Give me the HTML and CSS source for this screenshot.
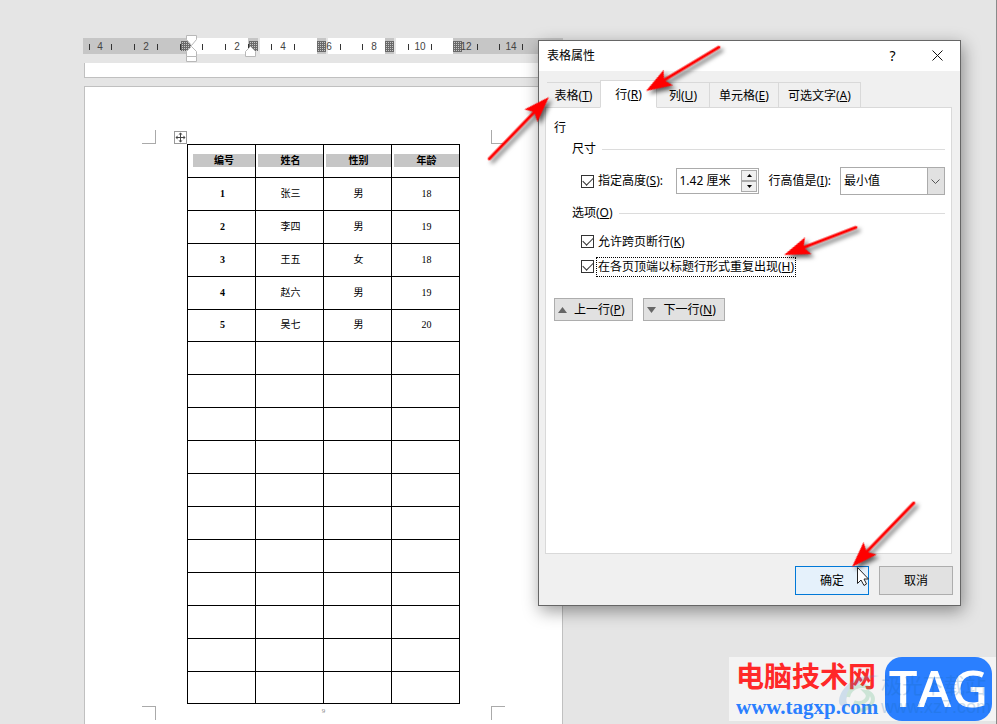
FILE: index.html
```html
<!DOCTYPE html>
<html lang="zh-CN">
<head>
  <title>表格属性</title>
  <meta charset="UTF-8">
  <meta name="viewport" content="width=device-width, initial-scale=1.0">
  <link rel="stylesheet" href="styles.css">
</head>
<body>
  <main class="document">
    <!-- horizontal ruler -->
    <svg class="ruler" width="480" height="30" viewBox="83 34 480 30">
      <defs>
        <pattern id="dots" x="0" y="0" width="2" height="2" patternUnits="userSpaceOnUse">
          <rect width="2" height="2" fill="#6a6a6a"/>
          <rect width="1" height="1" fill="#c8c8c8"/>
        </pattern>
      </defs>
      <g fill="#c6c6c6">
        <rect x="83" y="38" width="480" height="16"/>
      </g>
      <g fill="#e5e5e5">
        <rect x="248" y="51" width="12" height="3"/>
        <rect x="258" y="38" width="2" height="16"/>
        <rect x="326" y="38" width="2" height="16"/>
        <rect x="394" y="38" width="2" height="16"/>
      </g>
      <g fill="#fff">
        <rect x="191" y="38" width="57" height="16"/>
        <rect x="260" y="38" width="57" height="16"/>
        <rect x="328" y="38" width="57" height="16"/>
        <rect x="396" y="38" width="57" height="16"/>
      </g>
      <g fill="url(#dots)">
        <rect x="181" y="41" width="10" height="10"/>
        <rect x="249" y="41" width="9" height="10"/>
        <rect x="317" y="41" width="9" height="11"/>
        <rect x="385" y="41" width="9" height="11"/>
        <rect x="453" y="41" width="9" height="11"/>
      </g>
      <path d="M89.5 44v6M111.500 44v6M134.500 44v6M157.500 44v6M180.500 44v6M202.500 44v6M225.500 44v6M248.500 44v6M271.500 44v6M294.500 44v6M340.500 44v6M362.500 44v6M408.500 44v6M431.500 44v6M477.500 44v6M499.500 44v6M522.500 44v6" stroke="#333" fill="none"/>
      <g class="ruler-num">
        <text x="100" y="50">4</text>
        <text x="146" y="50">2</text>
        <text x="237" y="50">2</text>
        <text x="283" y="50">4</text>
        <text x="329" y="50">6</text>
        <text x="374" y="50">8</text>
        <text x="420" y="50">10</text>
        <text x="466" y="50">12</text>
        <text x="511" y="50">14</text>
      </g>
      <g fill="#fff" stroke="#b8b8b8">
        <path d="M186.500 35.500h10v4l-5 6l-5 -6z"/>
        <path d="M186.500 56.500v-5l5 -5l5 5v5z"/>
        <path d="M186.500 56.500h10v5h-10z"/>
        <path d="M245.500 56.500v-5l5 -5l5 5v5z"/>
      </g>
    </svg>

    <div class="prev-page"></div>

    <div class="page">
      <div class="marks marks-top"><i></i><i></i></div>
      <div class="table-wrap">
        <svg class="move-handle" width="13" height="13" viewBox="0 0 13 13" fill="none">
          <rect x="0.500" y="0.500" width="12" height="12" fill="#fff" stroke="#999"/>
          <path d="M6.500 2v9M2 6.500h9" stroke="#444"/>
          <path d="M6.500 1.500l2 2h-4zM6.500 11.500l2 -2h-4zM1.500 6.500l2 -2v4zM11.500 6.500l-2 -2v4z" fill="#444"/>
        </svg>
        <table class="roster">
          <thead>
            <tr><th><span>编号</span></th><th><span>姓名</span></th><th><span>性别</span></th><th><span>年龄</span></th></tr>
          </thead>
          <tbody>
            <tr><td>1</td><td>张三</td><td>男</td><td>18</td></tr>
            <tr><td>2</td><td>李四</td><td>男</td><td>19</td></tr>
            <tr><td>3</td><td>王五</td><td>女</td><td>18</td></tr>
            <tr><td>4</td><td>赵六</td><td>男</td><td>19</td></tr>
            <tr><td>5</td><td>吴七</td><td>男</td><td>20</td></tr>
            <tr><td></td><td></td><td></td><td></td></tr>
            <tr><td></td><td></td><td></td><td></td></tr>
            <tr><td></td><td></td><td></td><td></td></tr>
            <tr><td></td><td></td><td></td><td></td></tr>
            <tr><td></td><td></td><td></td><td></td></tr>
            <tr><td></td><td></td><td></td><td></td></tr>
            <tr><td></td><td></td><td></td><td></td></tr>
            <tr><td></td><td></td><td></td><td></td></tr>
            <tr><td></td><td></td><td></td><td></td></tr>
            <tr><td></td><td></td><td></td><td></td></tr>
            <tr><td></td><td></td><td></td><td></td></tr>
          </tbody>
        </table>
      </div>
      <div class="marks marks-bottom"><i></i><span>9</span><i></i></div>
    </div>
  </main>

  <form class="dialog" role="dialog" aria-labelledby="dialogTitle">
    <header class="titlebar">
      <h1 id="dialogTitle">表格属性</h1>
      <button type="button" class="help" aria-label="帮助">?</button>
      <button type="button" class="close" aria-label="关闭">
        <svg width="11" height="11" viewBox="0 0 11 11"><path d="M0.500 0.500l10 10M10.500 0.500l-10 10" stroke="#111" fill="none"/></svg>
      </button>
    </header>

    <nav class="tabs" role="tablist">
      <button type="button" role="tab" class="tab-table">表格(<u>T</u>)</button>
      <button type="button" role="tab" class="tab-row active" aria-selected="true">行(<u>R</u>)</button>
      <button type="button" role="tab" class="tab-col">列(<u>U</u>)</button>
      <button type="button" role="tab">单元格(<u>E</u>)</button>
      <button type="button" role="tab">可选文字(<u>A</u>)</button>
    </nav>

    <section class="panel">
      <h2>行</h2>
      <h3 class="group">尺寸</h3>
      <div class="size-row">
        <input type="checkbox" id="useHeight" checked>
        <label for="useHeight">指定高度(<u>S</u>):</label>
        <div class="spinner">
          <input type="text" value="1.42 厘米" aria-label="指定高度">
          <div class="steps">
            <button type="button" aria-label="增加"><svg width="5" height="3"><path d="M0 3h5l-2.500 -3z"/></svg></button>
            <button type="button" aria-label="减少"><svg width="5" height="3"><path d="M0 0h5l-2.500 3z"/></svg></button>
          </div>
        </div>
        <label for="rule">行高值是(<u>I</u>):</label>
        <div class="select">
          <select id="rule"><option>最小值</option><option>固定值</option></select>
          <svg width="9" height="5" viewBox="0 0 9 5"><path d="M0.500 0.500l4 4l4 -4" stroke="#555" fill="none"/></svg>
        </div>
      </div>
      <h3 class="group">选项(<u>O</u>)</h3>
      <div class="check">
        <input type="checkbox" id="breakRow" checked>
        <label for="breakRow">允许跨页断行(<u>K</u>)</label>
      </div>
      <div class="check">
        <input type="checkbox" id="repeatHead" checked>
        <label for="repeatHead" class="focused">在各页顶端以标题行形式重复出现(<u>H</u>)</label>
      </div>
      <div class="row-nav">
        <button type="button"><svg width="9" height="6"><path d="M0 6h9l-4.500 -6z"/></svg>上一行(<u>P</u>)</button>
        <button type="button"><svg width="9" height="6"><path d="M0 0h9l-4.500 6z"/></svg>下一行(<u>N</u>)</button>
      </div>
    </section>

    <footer class="actions">
      <button type="button" class="ok">确定</button>
      <button type="button">取消</button>
    </footer>
  </form>

  <aside class="brand">
    <div class="brand-text">
      <strong>电脑技术网</strong>
      <a href="#">www.tagxp.com</a>
    </div>
    <b class="brand-tag">TAG</b>
    <div class="ghost">
      <svg width="44" height="40" viewBox="0 0 44 40" fill="none">
        <path d="M42 3C24 -1 4 12 2 27c-1 7 6 8 11 5C3 30 14 8 42 3z" fill="#4d8fd0"/>
        <path d="M11 24C13 12 30 10 33 17M17 29c8 4 18 -4 12 -10c12 2 8 18 -9 19" stroke="#44b070" stroke-width="4"/>
      </svg>
      <p><span>极光下载站</span><small>www.xz7.com</small></p>
    </div>
  </aside>

  <!-- callout arrows and mouse pointer -->
  <svg class="callouts" width="997" height="724" viewBox="0 0 997 724">
    <defs>
      <path id="head" d="M0 0L26 -9L21 0L26 9z"/>
    </defs>
    <g class="arrow">
      <g transform="translate(549 97) rotate(134)"><path d="M20 0H86"/><use href="#head"/></g>
      <g transform="translate(646 91) rotate(-31)"><path d="M20 0H85"/><use href="#head"/></g>
      <g transform="translate(784 255) rotate(-21)"><path d="M20 0H77"/><use href="#head"/></g>
      <g transform="translate(852 567) rotate(-46)"><path d="M20 0H89"/><use href="#head"/></g>
    </g>
    <path d="M857.500 567.500v16l3.500 -3.500l3 5.500l2.500 -1.500l-2.500 -5h4.500z" fill="#fff" stroke="#222"/>
  </svg>
</body>
</html>
```
FILE: styles.css
```css
*{
  box-sizing:border-box;
}
body{
  margin:0;
  min-height:100vh;
  position:relative;
  overflow:hidden;
  background-color:#e5e5e5;
  border-right:1px solid #8a8a8a;
  color:#000;
  font-family:"Noto Sans","Noto Sans CJK SC",sans-serif;
  font-size:12px;
  line-height:16px;
}
button, input, select{
  font:inherit;
  color:inherit;
  margin:0;
  padding:0;
}
h1, h2, h3, p{
  margin:0;
  font-size:12px;
  font-weight:normal;
}
u{
  text-underline-offset:1px;
}

/* document */
.document{
  display:flex;
  flex-direction:column;
  width:48%;
  min-width:479px;
  height:100vh;
  margin-left:84px;
  padding-top:34px;
}
.ruler{
  display:block;
  flex:none;
  margin-left:-1px;
}
.ruler-num{
  font-family:"Liberation Sans",sans-serif;
  font-size:10px;
  text-anchor:middle;
  fill:#444;
}
.prev-page{
  flex:none;
  height:15px;
  margin-top:-1px;
  background:#fff;
  border:1px solid #c0c0c0;
  border-top:0;
}
.page{
  flex:1;
  margin-top:8px;
  padding-top:43px;
  background:#fff;
  border:1px solid #c0c0c0;
  border-bottom:0;
}
.marks{
  display:flex;
  justify-content:space-between;
  padding:0 57px;
  height:14px;
}
.marks i{
  width:14px;
  border:0 solid #aaa;
}
.marks i:first-child{
  border-right-width:1px;
}
.marks i:last-child{
  border-left-width:1px;
}
.marks-top i{
  border-bottom-width:1px;
}
.marks-bottom{
  margin-top:2px;
}
.marks-bottom i{
  border-top-width:1px;
}
.marks-bottom span{
  color:#888;
  font-family:"Liberation Serif",serif;
  font-size:7px;
  line-height:11px;
}
.table-wrap{
  position:relative;
  width:273px;
  margin:0 auto;
}
.move-handle{
  position:absolute;
  left:-13px;
  top:-13px;
}
.roster{
  width:100%;
  table-layout:fixed;
  border-collapse:collapse;
  font-family:"Liberation Serif","Noto Sans CJK SC",serif;
  font-size:10px;
  line-height:13px;
  text-align:center;
}
.roster tr{
  height:33px;
}
.roster tbody tr:nth-child(5), .roster tbody tr:last-child{
  height:32px;
}
.roster th, .roster td{
  padding:0 0 2px 2px;
  border:1px solid #000;
}
.roster th:first-child{
  padding-left:5px;
}
.roster th span{
  display:block;
  height:13px;
  background:#c6c6c6;
}
.roster td:first-child{
  font-weight:bold;
}

/* dialog window */
.dialog{
  position:absolute;
  left:538px;
  top:40px;
  width:423px;
  background:#f0f0f0;
  border:1px solid #666;
  box-shadow:2px 5px 16px rgba(0,0,0,.4);
}
.titlebar{
  display:flex;
  align-items:center;
  height:30px;
  padding-left:8px;
  background:#fff;
}
.titlebar h1{
  flex:1;
}
.titlebar button{
  width:45px;
  height:30px;
  border:0;
  background:none;
  font-size:14px;
}
.tabs{
  display:flex;
  align-items:flex-end;
  margin:9px 8px 0;
  height:28px;
  position:relative;
}
.tabs button{
  height:26px;
  padding:2px 8px 0;
  white-space:nowrap;
  background:#f0f0f0;
  border:1px solid #d9d9d9;
  border-left:0;
}
.tabs .tab-table{
  width:53px;
  padding:2px 0 0;
  border-right:0;
}
.tabs .active{
  width:57px;
  height:28px;
  background:#fff;
  border-left:1px solid #d9d9d9;
  border-bottom-color:#fff;
}
.tabs .tab-col{
  width:53px;
}
.tabs .tab-col ~ button{
  padding:2px 9px 0;
}
.panel{
  height:447px;
  margin:-1px 8px 0 6px;
  padding:12px 6px 0 8px;
  background:#fff;
  border:1px solid #d9d9d9;
}
.group{
  display:flex;
  align-items:center;
  gap:6px;
  margin:5px 0 0 18px;
}
.group u{
  margin:0 -6px;
}
.group::after{
  content:"";
  flex:1;
  height:1px;
  background:#dcdcdc;
}
.size-row{
  display:flex;
  align-items:center;
  height:28px;
  margin:10px 0 10px 27px;
}
input[type="checkbox"]{
  appearance:none;
  flex:none;
  width:13px;
  height:13px;
  margin-right:4px;
  border:1px solid #333;
  background:#fff;
  display:grid;
  place-items:center;
}
input[type="checkbox"]:checked::before{
  content:"";
  width:9px;
  height:5px;
  margin-top:-3px;
  border:solid #333;
  border-width:0 0 1px 1px;
  transform:rotate(-45deg);
}
.spinner{
  display:flex;
  width:83px;
  height:26px;
  margin:0 9px 0 auto;
  padding:1px;
  border:1px solid #ababab;
  background:#fff;
}
.spinner input{
  flex:1;
  min-width:0;
  padding-left:1px;
  border:0;
}
.steps{
  display:flex;
  flex-direction:column;
  width:16px;
}
.steps button{
  flex:1;
  display:grid;
  place-items:center;
  background:#f0f0f0;
  border:1px solid #ababab;
}
.select{
  position:relative;
  width:105px;
  height:28px;
  margin-left:9px;
}
.select select{
  appearance:none;
  width:100%;
  height:100%;
  padding-left:3px;
  border:1px solid #ababab;
  border-radius:0;
  background:linear-gradient(#ababab,#ababab) right 16px top 0/1px 100% no-repeat, linear-gradient(#e1e1e1,#e1e1e1) right/16px 100% no-repeat, #fff;
}
.select svg{
  position:absolute;
  right:5px;
  top:12px;
}
.check{
  display:flex;
  align-items:center;
  height:25px;
  margin-left:27px;
}
.group + .check{
  margin-top:8px;
}
.focused{
  height:20px;
  margin-left:-2px;
  padding:0 1px;
  line-height:18px;
  border:1px dotted #000;
}
.row-nav{
  display:flex;
  gap:10px;
  margin-top:19px;
}
.row-nav button{
  display:flex;
  align-items:center;
  height:23px;
  padding:0 8px 0 3px;
  background:#e1e1e1;
  border:1px solid #adadad;
}
.row-nav svg{
  margin-right:7px;
  fill:#666;
}
.actions{
  display:flex;
  justify-content:flex-end;
  gap:10px;
  padding:12px 7px 10px;
}
.actions button{
  width:74px;
  height:29px;
  background:#e1e1e1;
  border:1px solid #adadad;
}
.actions .ok{
  background:#e5f1fb;
  border-color:#0078d7;
}

/* site badge */
.brand{
  position:absolute;
  right:0;
  bottom:3px;
  display:flex;
  width:267px;
  height:64px;
  padding-left:7px;
  background:#f4f4f4;
}
.brand-text{
  width:149px;
}
.brand strong{
  display:block;
  color:#ff2828;
  font-family:"Noto Sans CJK SC",sans-serif;
  font-size:28px;
  line-height:36px;
}
.brand a{
  display:block;
  color:#2a7fff;
  font-family:"Liberation Serif",serif;
  font-size:21px;
  font-weight:bold;
  line-height:28px;
  text-decoration:none;
}
.brand-tag{
  width:107px;
  border-radius:17px;
  background:#2a7fff;
  color:#fff;
  font-family:"Open Sans",sans-serif;
  font-size:51px;
  font-weight:600;
  line-height:61px;
  text-align:center;
}
.ghost{
  position:absolute;
  left:108px;
  top:16px;
  display:flex;
  opacity:.22;
  color:#1668b0;
}
.ghost span, .ghost small{
  display:block;
  font-size:21px;
  line-height:24px;
}
.ghost small{
  font-family:"Liberation Sans",sans-serif;
  font-size:18px;
  line-height:20px;
}

.callouts{
  position:absolute;
  left:0;
  top:0;
  pointer-events:none;
}
.arrow{
  fill:#f00;
  stroke:#f00;
  filter:drop-shadow(3px 3px 2px rgba(0,0,0,.6));
}
.arrow path{
  stroke-width:3px;
  stroke-linecap:round;
}
.arrow use, #head{
  stroke-width:0;
}
```
